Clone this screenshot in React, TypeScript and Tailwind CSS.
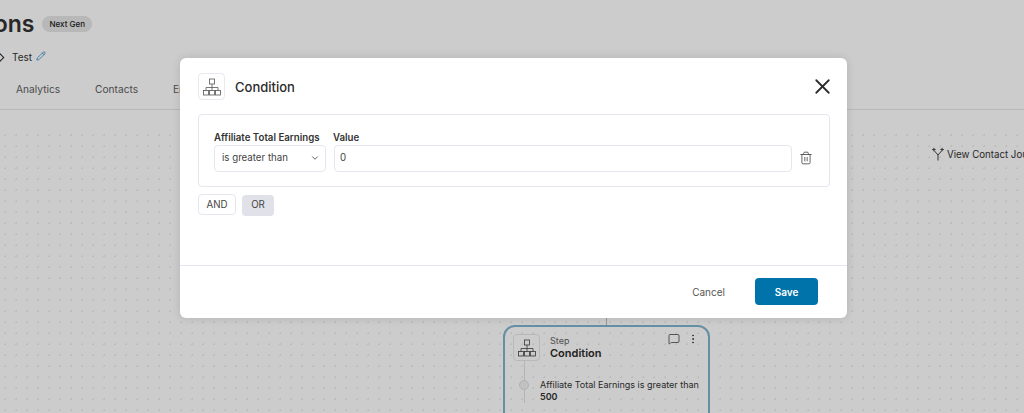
import { ChevronDown, EllipsisVertical, MessageSquare, Pencil, Trash2, X } from 'lucide-react';

const Sitemap = ({ className }: { className?: string }) => (
  <svg viewBox="0 0 20 20" fill="none" stroke="currentColor" strokeWidth="0.8" className={className}>
    <rect x="7.5" y="2" width="5" height="5" />
    <path d="M10 7v3.5M4 13.5v-3h12v3M10 10.5v3" />
    <rect x="1.5" y="13.5" width="5" height="4.5" />
    <rect x="7.5" y="13.5" width="5" height="4.5" />
    <rect x="13.5" y="13.5" width="5" height="4.5" />
  </svg>
);

const Journey = ({ className }: { className?: string }) => (
  <svg viewBox="0 0 12 14" fill="none" stroke="currentColor" strokeWidth="1" className={className}>
    <path d="M6 13.5V8L2 3.5M6 8l4-4.5" />
    <path d="M0.2 2.5h3.4M1.9 0.8v3.4M8.4 2.5h3.4M10.1 0.8v3.4" />
  </svg>
);

const StepNode = () => (
  <div className="absolute left-[503px] top-[215px] h-[140px] w-[207px] rounded-xl border-2 border-[#7fb4cc] pl-[8px] pr-[9px] pt-[7px]">
    <div className="absolute left-[101px] top-[-9px] h-[7px] w-px bg-[#bcbcbc]" />
    <div className="flex">
      <div className="flex h-[27px] w-[27px] items-center justify-center rounded border border-[#e6e6e6]">
        <Sitemap className="h-[20px] w-[20px] text-[#444]" />
      </div>
      <div className="ml-[10px] flex-1">
        <div className="mt-[1px] text-[9px] leading-[12px] text-[#666]">Step</div>
        <div className="mt-[-1px] text-[11px] leading-[14px] font-semibold text-[#2b2b2b]">Condition</div>
      </div>
      <MessageSquare className="mt-[-1px] h-[12px] w-[12px] text-[#444]" strokeWidth={1.6} />
      <EllipsisVertical className="mt-[-1px] ml-[7px] h-[12px] w-[12px] text-[#444]" />
    </div>
    <div className="relative pl-[27px] text-[9px] leading-[12px] whitespace-nowrap text-[#333]">
      <div className="absolute left-[11px] top-0 h-[42px] w-px bg-[#e2e2e2]" />
      <div className="absolute left-[6px] top-[19px] h-[10px] w-[10px] rounded-full border border-[#dedede] bg-[#f2f2f2]" />
      <div className="pt-[18px]">Affiliate Total Earnings is greater than</div>
      <div className="font-semibold">500</div>
    </div>
  </div>
);

export default function App() {
  return (
    <div className="relative flex h-[413px] w-[1024px] flex-col overflow-hidden bg-white font-['Inter',sans-serif]">
      <header className="h-[110px] shrink-0 border-b border-[#e6e6e6]">
        <div className="flex items-center pt-[10px]">
          <h1 className="ml-[-107px] text-[23px] leading-[28px] font-semibold text-[#333]">Automations</h1>
          <span className="ml-[8px] rounded-full bg-[#e6e6e6] px-[7px] py-[2px] text-[8px] leading-[12px] font-medium text-[#222]">
            Next Gen
          </span>
        </div>
        <div className="mt-[12px] flex items-center">
          <div className="ml-[-4px] h-[7px] w-[7px] rotate-45 border border-[#222]" />
          <span className="ml-[9px] text-[10px] leading-[14px] text-[#333]">Test</span>
          <Pencil className="ml-[4px] h-[10px] w-[10px] -translate-y-[1px] text-[#3f8fc9]" />
        </div>
        <nav className="mt-[18px] flex pl-[16px] text-[10.2px] leading-[14px] text-[#606060]">
          <span className="w-[79px]">Analytics</span>
          <span className="w-[78px]">Contacts</span>
          <span>Emails</span>
        </nav>
      </header>

      <main className="relative flex-1">
        <div className="absolute inset-x-0 top-[20px] bottom-0 bg-[radial-gradient(#ececec_1px,transparent_1px)] bg-[length:11px_11px]" />
        <div className="absolute left-[932px] top-[38px] flex items-center gap-[3px] whitespace-nowrap text-[9.7px] leading-[14px] text-[#333]">
          <Journey className="h-[14px] w-[12px] -translate-y-[1px] text-[#444]" />
          View Contact Journey
        </div>
        <StepNode />
      </main>

      {/* overlay + modal */}
      <div className="absolute inset-0 bg-black/20 pl-[180px] pt-[58px]">
        <div className="flex h-[260px] w-[667px] flex-col rounded-md bg-white shadow-[0_0_10px_rgba(0,0,0,0.12)]">
          <div className="flex items-center pl-[18px] pr-[12px] pt-[15px]">
            <div className="flex h-[27px] w-[27px] items-center justify-center rounded border border-[#e8e8ee]">
              <Sitemap className="h-[20px] w-[20px] text-[#555]" />
            </div>
            <h2 className="ml-[10px] flex-1 text-[13px] leading-[20px] font-medium text-[#2b2b2b]">Condition</h2>
            <X className="h-[25px] w-[25px] text-[#2b2b2b]" strokeWidth={1.7} />
          </div>

          <div className="ml-[18px] mr-[17px] mt-[14px] flex h-[73px] items-center rounded border border-[#e6e6ef] pl-[15px] pr-[16px] pt-[2px]">
            <div className="w-[120px]">
              <div className="text-[9.7px] leading-[12px] font-semibold whitespace-nowrap text-[#333]">Affiliate Total Earnings</div>
              <div className="mt-[1px] flex h-[27px] w-[112px] items-center justify-between rounded border border-[#e6e6ef] pl-[7px] pr-[5px] text-[9.7px] text-[#444]">
                is greater than
                <ChevronDown className="h-[10px] w-[10px] text-[#444]" />
              </div>
            </div>
            <div className="flex-1">
              <div className="ml-[-1px] text-[9.7px] leading-[12px] font-semibold text-[#333]">Value</div>
              <div className="mt-[1px] flex h-[27px] items-center rounded border border-[#e6e6ef] pl-[5px] text-[9.7px] text-[#444]">0</div>
            </div>
            <Trash2 className="ml-[7px] mt-[13px] h-[14px] w-[14px] text-[#444]" strokeWidth={1.4} />
          </div>

          <div className="mx-[18px] mt-[7px] flex items-start gap-[6px] text-[9.7px] text-[#444]">
            <button className="h-[21px] w-[38px] rounded border border-[#e6e6ef] pt-px">AND</button>
            <button className="mt-[1px] h-[21px] w-[32px] rounded bg-[#e1e1ea]">OR</button>
          </div>

          <div className="mt-auto flex h-[53px] items-start justify-end border-t border-[#e6e6ef] pr-[29px] pt-[12px]">
            <span className="mr-[30px] pt-px text-[10px] leading-[27px] text-[#555]">Cancel</span>
            <button className="h-[27px] w-[63px] rounded bg-[#0073aa] pt-px text-[10px] font-semibold text-white">Save</button>
          </div>
        </div>
      </div>
    </div>
  );
}
